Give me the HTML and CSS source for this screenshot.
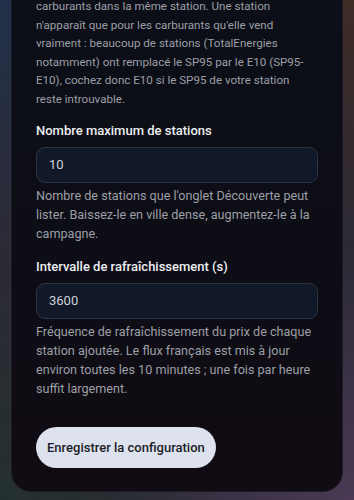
FILE: index.html
```html
<!DOCTYPE html>
<html lang="fr">

<head>
  <meta charset="UTF-8">
  <meta name="viewport" content="width=device-width, initial-scale=1.0">
  <title>Configuration</title>
  <link rel="stylesheet" href="styles.css">
</head>

<body>
  <div class="page">
    <section class="settings-card">
      <p class="hint intro">carburants dans la même station. Une station n'apparaît que pour les carburants qu'elle vend vraiment : beaucoup de stations (TotalEnergies notamment) ont remplacé le SP95 par le E10 (SP95-E10), cochez donc E10 si le SP95 de votre station reste introuvable.</p>

      <div class="field">
        <label for="maxStations">Nombre maximum de stations</label>
        <input id="maxStations" type="text" value="10">
        <p class="hint">Nombre de stations que l'onglet Découverte peut lister. Baissez-le en ville dense, augmentez-le à la campagne.</p>
      </div>

      <div class="field">
        <label for="refresh">Intervalle de rafraîchissement (s)</label>
        <input id="refresh" type="text" value="3600">
        <p class="hint">Fréquence de rafraîchissement du prix de chaque station ajoutée. Le flux français est mis à jour environ toutes les 10 minutes ; une fois par heure suffit largement.</p>
      </div>

      <button class="save-btn" type="button">Enregistrer la configuration</button>
    </section>
  </div>
</body>

</html>
```

FILE: styles.css
```css
html,
body {
  margin: 0;
  height: 100%;
}

body {
  overflow: hidden;
  font-family: Roboto, "Noto Sans", sans-serif;
  background:
    radial-gradient(ellipse 60% 50% at 0% 100%, #24302f 0%, transparent 100%),
    radial-gradient(ellipse 70% 50% at 100% 100%, #4a3a55 0%, transparent 100%),
    radial-gradient(ellipse 60% 50% at 0% 0%, #22314a 0%, transparent 100%),
    radial-gradient(ellipse 60% 50% at 100% 0%, #3e2c26 0%, transparent 100%),
    #2c2a35;
}

.page {
  padding: 0 11px;
}

.settings-card {
  margin-top: -28px;
  padding: 24px 24px 23px;
  border: 1px solid #1e1c26;
  border-radius: 20px;
  background: linear-gradient(180deg, #0c0f18 0%, #0d0d15 55%, #110b13 100%);
}

.hint {
  margin: 0;
  font-size: 12.6px;
  line-height: 19px;
  color: #9c9fa6;
}

.hint.intro {
  font-size: 11.6px;
  line-height: 18.6px;
}

.field {
  margin-top: 12px;
}

.field + .field {
  margin-top: 14px;
}

.field label {
  display: block;
  font-size: 13px;
  font-weight: 500;
  line-height: 20px;
  color: #eceef2;
}

.field input {
  display: block;
  box-sizing: border-box;
  width: 100%;
  height: 36px;
  margin: 6px 0 3px;
  padding: 0 12px;
  border: 1px solid #2a3445;
  border-radius: 9px;
  background: #111827;
  font-family: inherit;
  font-size: 13px;
  color: #cdd2da;
  outline: none;
}

.save-btn {
  margin-top: 29px;
  height: 41px;
  padding: 0 11px;
  border: none;
  border-radius: 21px;
  background: #dde2ee;
  font-family: inherit;
  font-size: 13px;
  font-weight: 500;
  color: #1b1d26;
}
```
